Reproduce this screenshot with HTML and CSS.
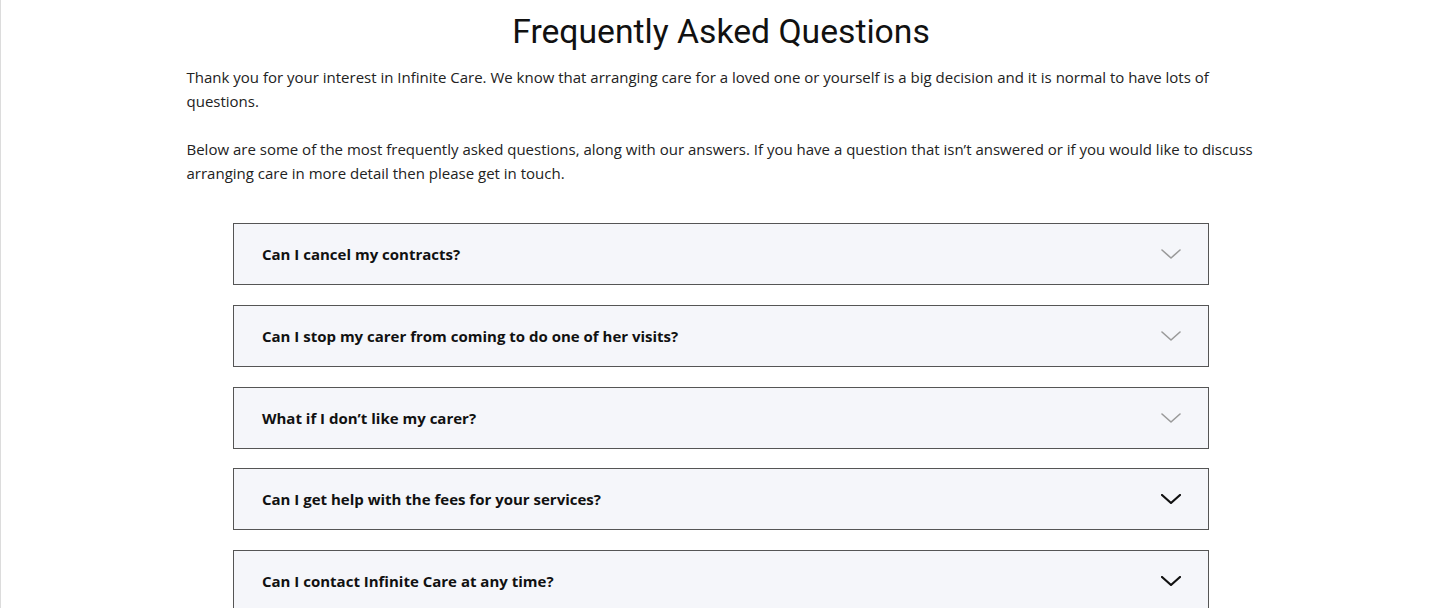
FILE: index.html
```html
<!DOCTYPE html>
<html lang="en">
<head>
<meta charset="utf-8">
<title>FAQ</title>
<link rel="stylesheet" href="styles.css">
</head>
<body>
<main class="page">
  <h1 class="title">Frequently Asked Questions</h1>
  <div class="intro">
    <p>Thank you for your interest in Infinite Care. We know that arranging care for a loved one or yourself is a big decision and it is normal to have lots of questions.</p>
    <p>Below are some of the most frequently asked questions, along with our answers. If you have a question that isn’t answered or if you would like to discuss arranging care in more detail then please get in touch.</p>
  </div>
  <div class="faq">
    <div class="item"><span class="q">Can I cancel my contracts?</span><svg class="chev light" viewBox="0 0 20 10"><path d="M1 1 L10 9 L19 1"/></svg></div>
    <div class="item"><span class="q">Can I stop my carer from coming to do one of her visits?</span><svg class="chev light" viewBox="0 0 20 10"><path d="M1 1 L10 9 L19 1"/></svg></div>
    <div class="item"><span class="q">What if I don’t like my carer?</span><svg class="chev light" viewBox="0 0 20 10"><path d="M1 1 L10 9 L19 1"/></svg></div>
    <div class="item"><span class="q">Can I get help with the fees for your services?</span><svg class="chev dark" viewBox="0 0 20 10"><path d="M1 1 L10 9 L19 1"/></svg></div>
    <div class="item"><span class="q">Can I contact Infinite Care at any time?</span><svg class="chev dark" viewBox="0 0 20 10"><path d="M1 1 L10 9 L19 1"/></svg></div>
  </div>
</main>
</body>
</html>
```
FILE: styles.css
```css
html, body {
  margin: 0;
  padding: 0;
  background: #fff;
}
body {
  border-left: 1px solid #dcdcdc;
  min-height: 608px;
  box-sizing: border-box;
}
.page {
  width: 1066px;
  margin: 0 auto;
  padding-left: 2px;
}
.title {
  font-family: Roboto, "Liberation Sans", sans-serif;
  font-weight: 400;
  font-size: 33.7px;
  line-height: 40px;
  color: #111;
  text-align: center;
  margin: 12px 0 0;
  padding-left: 3px;
}
.intro {
  margin-top: 13px;
  margin-right: -14px;
  font-family: "Open Sans", "Liberation Sans", sans-serif;
  font-size: 15px;
  line-height: 24px;
  color: #222;
}
.intro p {
  margin: 0 0 24px;
}
.intro p:last-child {
  margin-bottom: 0;
}
.faq {
  width: 976px;
  margin: 38px 0 0 46.5px;
  display: flex;
  flex-direction: column;
  gap: 19.75px;
}
.item {
  height: 62px;
  box-sizing: border-box;
  border: 1px solid #555;
  background: #f5f6fa;
  display: flex;
  align-items: center;
  justify-content: space-between;
  padding: 0 27px 0 28px;
}
.q {
  font-family: "Open Sans", "Liberation Sans", sans-serif;
  font-weight: 700;
  font-size: 15px;
  color: #111;
}
.chev {
  width: 20px;
  height: 10px;
  fill: none;
  stroke-linecap: round;
  stroke-linejoin: round;
}
.chev.light {
  stroke: #9a9a9a;
  stroke-width: 1.6;
}
.chev.dark {
  stroke: #111;
  stroke-width: 2.2;
}
```
